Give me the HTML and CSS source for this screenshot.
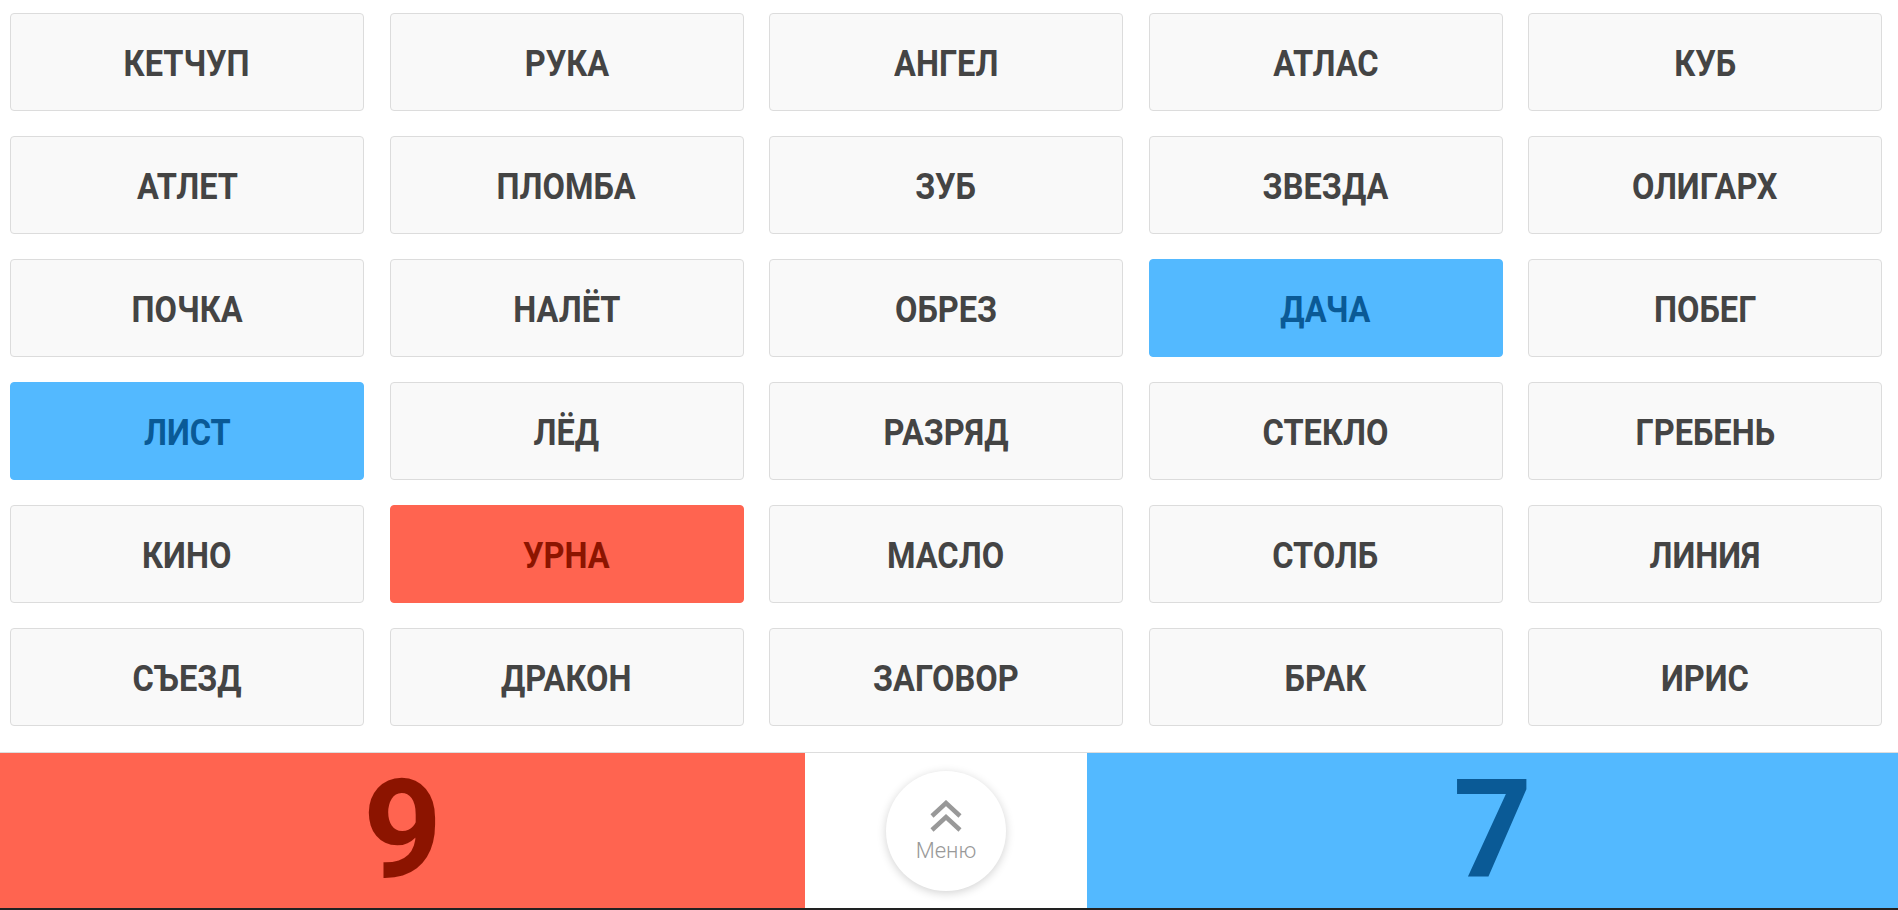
FILE: index.html
```html
<!DOCTYPE html>
<html lang="ru">
<head>
<meta charset="utf-8">
<title>Игра</title>
<link rel="stylesheet" href="styles.css">
</head>
<body>
<div class="page">
  <div class="board">
    <div class="card"><span class="word">КЕТЧУП</span></div>
    <div class="card"><span class="word">РУКА</span></div>
    <div class="card"><span class="word">АНГЕЛ</span></div>
    <div class="card"><span class="word">АТЛАС</span></div>
    <div class="card"><span class="word">КУБ</span></div>
    <div class="card"><span class="word">АТЛЕТ</span></div>
    <div class="card"><span class="word">ПЛОМБА</span></div>
    <div class="card"><span class="word">ЗУБ</span></div>
    <div class="card"><span class="word">ЗВЕЗДА</span></div>
    <div class="card"><span class="word">ОЛИГАРХ</span></div>
    <div class="card"><span class="word">ПОЧКА</span></div>
    <div class="card"><span class="word">НАЛЁТ</span></div>
    <div class="card"><span class="word">ОБРЕЗ</span></div>
    <div class="card card-blue"><span class="word">ДАЧА</span></div>
    <div class="card"><span class="word">ПОБЕГ</span></div>
    <div class="card card-blue"><span class="word">ЛИСТ</span></div>
    <div class="card"><span class="word">ЛЁД</span></div>
    <div class="card"><span class="word">РАЗРЯД</span></div>
    <div class="card"><span class="word">СТЕКЛО</span></div>
    <div class="card"><span class="word">ГРЕБЕНЬ</span></div>
    <div class="card"><span class="word">КИНО</span></div>
    <div class="card card-red"><span class="word">УРНА</span></div>
    <div class="card"><span class="word">МАСЛО</span></div>
    <div class="card"><span class="word">СТОЛБ</span></div>
    <div class="card"><span class="word">ЛИНИЯ</span></div>
    <div class="card"><span class="word">СЪЕЗД</span></div>
    <div class="card"><span class="word">ДРАКОН</span></div>
    <div class="card"><span class="word">ЗАГОВОР</span></div>
    <div class="card"><span class="word">БРАК</span></div>
    <div class="card"><span class="word">ИРИС</span></div>
  </div>
  <div class="scorebar">
    <div class="score score-red">9</div>
    <div class="menu-cell">
      <button class="menu-btn">
        <svg class="menu-icon" width="34" height="32" viewBox="0 0 34 32">
          <polyline points="3,16 17,3 31,16" fill="none" stroke="#999" stroke-width="4.5"/>
          <polyline points="3,30 17,17 31,30" fill="none" stroke="#999" stroke-width="4.5"/>
        </svg>
        <span class="menu-label">Меню</span>
      </button>
    </div>
    <div class="score score-blue">7</div>
  </div>
  <div class="bottom-strip"></div>
</div>
</body>
</html>
```

FILE: styles.css
```css
html, body {
  margin: 0;
  padding: 0;
  background: #ffffff;
}

.page {
  width: 1898px;
  height: 910px;
  display: flex;
  flex-direction: column;
  overflow: hidden;
}

.board {
  display: grid;
  grid-template-columns: repeat(5, 1fr);
  grid-auto-rows: 98px;
  column-gap: 25.5px;
  row-gap: 25px;
  padding: 13px 16px 26px 10px;
  flex-shrink: 0;
}

.card {
  display: flex;
  align-items: center;
  justify-content: center;
  padding-top: 2px;
  box-sizing: border-box;
  background: #f9f9f9;
  border: 1px solid #dcdcdc;
  border-radius: 4px;
  font-family: Roboto, "Liberation Sans", sans-serif;
  font-weight: 700;
  font-size: 37px;
  color: #444444;
  white-space: nowrap;
}

.word {
  display: inline-block;
  transform: scaleX(0.88);
}

.card-blue {
  background: #53b9ff;
  border-color: #53b9ff;
  color: #0a5a96;
}

.card-red {
  background: #ff6450;
  border-color: #ff6450;
  color: #8c1400;
}

.scorebar {
  display: flex;
  height: 155px;
  flex-shrink: 0;
  border-top: 1px solid #dddddd;
}

.score {
  height: 155px;
  text-align: center;
  font-family: Roboto, "Noto Sans", sans-serif;
  font-weight: 700;
  font-size: 138px;
  line-height: 155px;
}

.score-red {
  width: 805px;
  background: #ff6450;
  color: #8c1400;
}

.score-blue {
  flex: 1;
  background: #53b9ff;
  color: #0a5a96;
}

.menu-cell {
  width: 282px;
  display: flex;
  align-items: center;
  justify-content: center;
  background: #ffffff;
}

.menu-btn {
  width: 120px;
  height: 120px;
  border-radius: 50%;
  border: none;
  background: #ffffff;
  box-shadow: 0 2px 10px rgba(0, 0, 0, 0.18);
  display: flex;
  flex-direction: column;
  align-items: center;
  justify-content: center;
  padding: 0;
  gap: 8px;
  cursor: pointer;
}

.menu-icon {
  display: block;
}

.menu-label {
  font-family: Roboto, "Liberation Sans", sans-serif;
  font-weight: 300;
  font-size: 22px;
  color: #999999;
  line-height: 1;
}

.bottom-strip {
  height: 2px;
  flex-shrink: 0;
  background: #222222;
}
```
